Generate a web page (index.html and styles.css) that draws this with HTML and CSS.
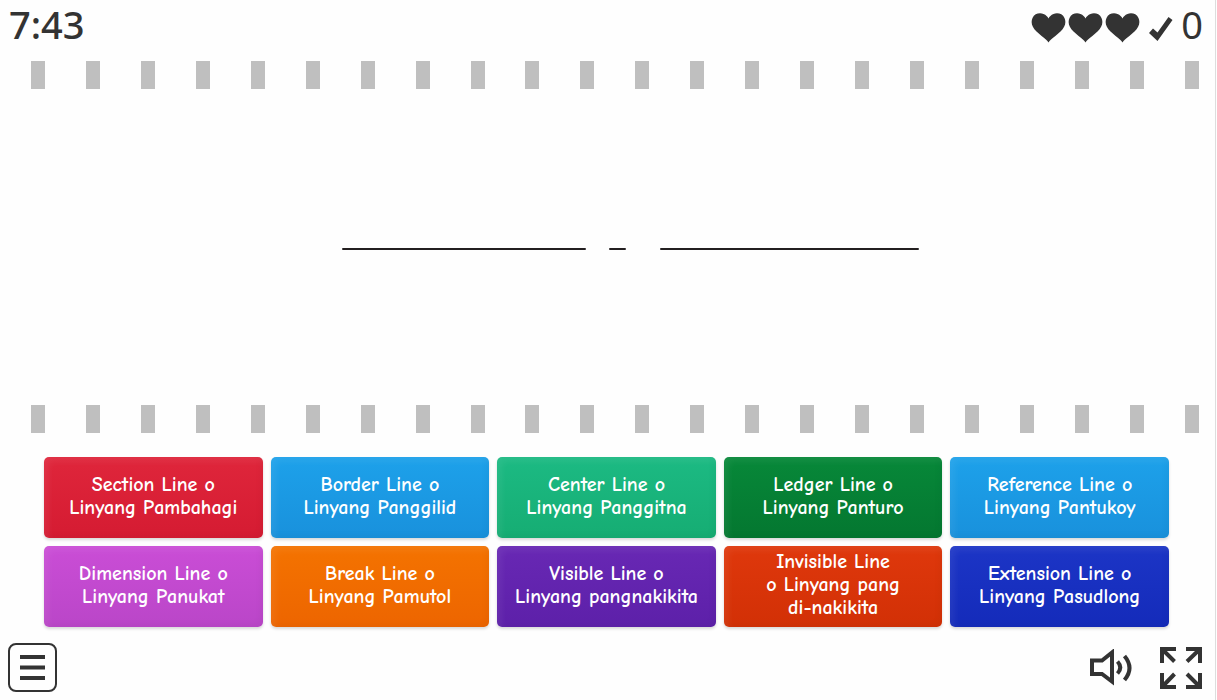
FILE: index.html
```html
<!DOCTYPE html>
<html lang="fil">
<head>
<meta charset="utf-8">
<meta name="viewport" content="width=device-width, initial-scale=1">
<title>Linyang Pambahagi</title>
<link rel="stylesheet" href="styles.css">
</head>
<body>
<svg class="defs" width="0" height="0" aria-hidden="true">
  <symbol id="heart" viewBox="0 0 35 30"><path d="M17.500 29.500C15 25.500 10 23 5.500 18.500C1 14-.5 9.500 1.500 5C3.500 .3 9-.5 12.500 1C15 2 16.500 3.500 17.500 5.500C18.500 3.500 20 2 22.500 1C26-.5 31.500 .3 33.500 5C35.500 9.500 34 14 29.500 18.500C25 23 20 25.500 17.500 29.500Z"/></symbol>
</svg>
<main class="game">
  <header class="bar">
    <div class="timer">7:43</div>
    <div class="status">
      <div class="lives">
        <svg class="heart"><use href="#heart"/></svg>
        <svg class="heart"><use href="#heart"/></svg>
        <svg class="heart"><use href="#heart"/></svg>
      </div>
      <svg class="check" viewBox="0 0 24 24"><path d="M0 16L4 11.500L8.500 15.500L19.500 0L23.500 3L8.500 24Z"/></svg>
      <div class="score">0</div>
    </div>
  </header>

  <div class="rail"><i></i><i></i><i></i><i></i><i></i><i></i><i></i><i></i><i></i><i></i><i></i><i></i><i></i><i></i><i></i><i></i><i></i><i></i><i></i><i></i><i></i><i></i></div>
  <section class="question">
    <svg class="line" viewBox="0 0 577 4" role="img" aria-label="Center line"><path d="M1 2H243M268 2H283M319 2H576"/></svg>
  </section>
  <div class="rail"><i></i><i></i><i></i><i></i><i></i><i></i><i></i><i></i><i></i><i></i><i></i><i></i><i></i><i></i><i></i><i></i><i></i><i></i><i></i><i></i><i></i><i></i></div>

  <section class="answers">
    <button class="tile red">Section Line o<br>Linyang Pambahagi</button>
    <button class="tile sky">Border Line o<br>Linyang Panggilid</button>
    <button class="tile mint">Center Line o<br>Linyang Panggitna</button>
    <button class="tile green">Ledger Line o<br>Linyang Panturo</button>
    <button class="tile sky">Reference Line o<br>Linyang Pantukoy</button>
    <button class="tile pink">Dimension Line o<br>Linyang Panukat</button>
    <button class="tile orange">Break Line o<br>Linyang Pamutol</button>
    <button class="tile purple">Visible Line o<br>Linyang pangnakikita</button>
    <button class="tile rust">Invisible Line<br>o Linyang pang<br>di-nakikita</button>
    <button class="tile blue">Extension Line o<br>Linyang Pasudlong</button>
  </section>

  <footer class="controls">
    <button class="menu" aria-label="Menu"><svg viewBox="0 0 25 26"><path d="M0 2H25M0 12.500H25M0 23H25"/></svg></button>
    <div class="tools">
      <button class="tool" aria-label="Sound"><svg class="sound" viewBox="0 0 42 37"><path d="M2 11.500H12L22 3.500V32.500L12 25H2Z"/><path d="M27.500 12.500Q33 18.500 27.500 24.500M34.500 7Q44.500 19 34.500 31"/></svg></button>
      <button class="tool" aria-label="Fullscreen"><svg class="full" viewBox="0 0 42 42"><path d="M2 16V2H16M2 2L14.500 14.500M26 2H40V16M40 2L27 14.500M2 26V40H16M2 40L14.500 27M26 40H40V26M40 40L27 27"/></svg></button>
    </div>
  </footer>
</main>
</body>
</html>
```
FILE: styles.css
```css
* { box-sizing: border-box; }
body { margin: 0; background: #fefefe; color: #333; font-family: "Noto Sans", "Open Sans", sans-serif; }
button { border: 0; padding: 0; background: none; color: inherit; cursor: pointer; }
svg { display: block; }
.defs { position: absolute; }
.game { display: flex; flex-direction: column; min-height: 100vh; margin-right: 1px; border-right: 1px solid #ddd; }

.bar { display: flex; justify-content: space-between; height: 61px; padding: 0 12px 0 9px; font-size: 38px; font-weight: 500; line-height: 49px; }
.score { font-weight: 400; }
.status, .lives { display: flex; }
.lives { gap: 2px; padding-top: 13px; }
.heart { width: 35px; height: 30px; fill: #333; }
.check { width: 24px; height: 24px; margin: 17px 8px 0 9px; fill: #333; }

.rail { display: flex; justify-content: space-between; height: 28px; padding: 0 16px 0 31px; }
.rail i { width: 14px; background: #bfbfbf; }
.question { flex: 1; display: flex; align-items: center; justify-content: center; padding: 3px 0 0 45px; min-height: 200px; }
.line { width: 50%; max-width: 577px; fill: none; stroke: #231f20; stroke-width: 2; stroke-linecap: round; }

.answers { display: grid; grid-template-columns: repeat(5, 1fr); grid-auto-rows: minmax(81px, auto); gap: 8px; padding: 24px 46px 0 44px; }
.tile { padding-bottom: 4px; border-radius: 5px; color: #fff; font: bold 20px/23px "Comic Neue", "Comic Sans MS", Lato, sans-serif; box-shadow: inset 4px 4px 7px rgba(255,255,255,.07), inset -3px -3px 6px rgba(0,0,0,.03), 0 2px 3px rgba(0,0,0,.15); }
.red { background: linear-gradient(#df263b, #d51b32); }
.sky { background: linear-gradient(#1da1ea, #1991dc); }
.mint { background: linear-gradient(#1cba83, #16ad73); }
.green { background: linear-gradient(#078839, #047730); }
.pink { background: linear-gradient(#ca4dd6, #ba46c8); }
.orange { background: linear-gradient(#f47300, #ed6500); }
.purple { background: linear-gradient(#6828b4, #5d20a9); }
.rust { background: linear-gradient(#df380c, #d23006); }
.blue { background: linear-gradient(#1c35c6, #142bba); }

.controls { display: flex; justify-content: space-between; padding: 16px 13px 8px 8px; }
.menu { display: grid; place-items: center; width: 49px; height: 49px; border: 2px solid #333; border-radius: 8px; }
.menu svg { width: 25px; height: 26px; stroke: #333; stroke-width: 4; }
.tools { display: flex; align-items: center; gap: 28px; }
.tool svg { fill: none; stroke: #333; stroke-width: 4; }
.sound { width: 42px; height: 37px; }
.full { width: 42px; height: 42px; }
```
